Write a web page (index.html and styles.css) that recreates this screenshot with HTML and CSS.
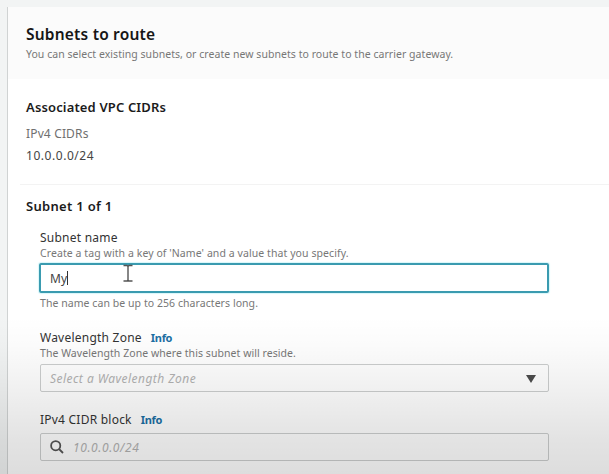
FILE: index.html
```html
<!DOCTYPE html>
<html lang="en">
<head>
<meta charset="utf-8">
<title>Subnets to route</title>
<link rel="stylesheet" href="styles.css">
</head>
<body>
<main class="panel">
  <header class="panel-header">
    <h1 class="title">Subnets to route</h1>
    <p class="hint lead">You can select existing subnets, or create new subnets to route to the carrier gateway.</p>
  </header>
  <section class="cidrs">
    <h2 class="heading assoc">Associated VPC CIDRs</h2>
    <div class="value muted">IPv4 CIDRs</div>
    <div class="value address">10.0.0.0/24</div>
  </section>
  <section class="subnet">
    <h2 class="heading count">Subnet 1 of 1</h2>
    <div class="field name-field">
      <div class="label">Subnet name</div>
      <div class="hint name-hint">Create a tag with a key of 'Name' and a value that you specify.</div>
      <div class="control focused"><span class="typed">My</span><span class="caret"></span>
        <svg class="pointer" width="12" height="20" viewBox="0 0 12 20"><path d="M1.5 1.5H4.8Q6 1.5 6 3Q6 1.5 7.2 1.5H10.5M6 3V17M1.5 17H4.8Q6 17 6 15.5Q6 17 7.2 17H10.5"/></svg>
      </div>
      <div class="hint limit">The name can be up to 256 characters long.</div>
    </div>
    <div class="field zone-field">
      <div class="label-row"><span class="label zone">Wavelength Zone</span><a class="info">Info</a></div>
      <div class="hint zone-hint">The Wavelength Zone where this subnet will reside.</div>
      <div class="control select"><span class="placeholder">Select a Wavelength Zone</span>
        <svg class="arrow" width="10" height="8" viewBox="0 0 10 8"><path d="M0 0H10L5 8Z"/></svg>
      </div>
    </div>
    <div class="field block-field">
      <div class="label-row"><span class="label block">IPv4 CIDR block</span><a class="info">Info</a></div>
      <div class="control search">
        <svg class="lens" width="14" height="14" viewBox="0 0 14 14"><circle cx="5.7" cy="5.7" r="4.6"/><path d="M9 9L13 13"/></svg>
        <span class="placeholder cidr">10.0.0.0/24</span>
      </div>
    </div>
  </section>
</main>
<div class="shade"></div>
</body>
</html>
```
FILE: styles.css
```css
* { box-sizing: border-box; }
body {
  margin: 0;
  height: 474px;
  overflow: hidden;
  padding: 7px 0 0 7px;
  background: #f2f4f4;
  font-family: "Noto Sans", "Open Sans", sans-serif;
  color: #333;
}
h1, h2, p { margin: 0; }
.panel {
  height: 467px;
  border-left: 1px solid #d0d3d3;
  background: #fff;
  white-space: nowrap;
}
.panel-header {
  height: 72px;
  padding: 16px 18px 0;
  background: #fbfbfb;
}
.title { font-size: 15.5px; line-height: 22px; font-weight: 600; letter-spacing: 0.2px; color: #161616; }
.hint { font-size: 10.5px; line-height: 14px; letter-spacing: 0.06px; color: #777; }
.lead { margin-top: 2px; letter-spacing: 0.045px; }
.cidrs {
  height: 106px;
  margin-left: 12px;
  padding: 18px 0 0 6px;
  border-bottom: 1px solid #f3f3f3;
}
.heading { font-size: 13px; line-height: 20px; font-weight: 600; letter-spacing: 0.15px; color: #1b1b1b; }
.count { letter-spacing: 0.3px; }
.value { font-size: 12px; line-height: 22px; }
.muted { margin-top: 6px; letter-spacing: 0.15px; color: #707070; }
.address { letter-spacing: 0.54px; color: #444; }
.subnet { padding: 11px 18px 0; }
.field { width: 510px; margin-left: 14px; }
.label { display: block; font-size: 12px; line-height: 18px; letter-spacing: 0.23px; color: #333; }
.label-row { display: flex; gap: 9px; }
.info { font-size: 11px; line-height: 18px; font-weight: 700; letter-spacing: -0.3px; color: #1b6fa3; }
.name-field { margin-top: 13px; }
.control {
  position: relative;
  display: flex;
  align-items: center;
  width: 509px;
  height: 28px;
  border: 1px solid #cccece;
  border-radius: 2px;
  padding: 0 9px;
  font-size: 12px;
}
.focused {
  width: 510px;
  height: 30px;
  margin: 3px 0 0 -1px;
  border: 2px solid #3a9bb0;
  box-shadow: 0 0 1px 1px #d8f7fa;
}
.typed { color: #444; }
.caret { width: 1px; height: 14px; background: #333; }
.pointer { position: absolute; left: 81px; top: -1px; fill: none; stroke: #555; stroke-width: 1.4; }
.limit { margin-top: 3px; }
.zone-field { margin-top: 19px; }
.zone-hint { margin-top: -1px; }
.name-hint { margin-top: -1px; letter-spacing: 0.08px; }
.select { margin-top: 4px; }
.placeholder { font-style: italic; letter-spacing: 0.46px; color: #b2b2b2; }
.arrow { position: absolute; right: 12px; top: 10px; fill: #4c4c4c; }
.block-field { margin-top: 19px; }
.search { margin-top: 4px; }
.lens { fill: none; stroke: #555; stroke-width: 1.8; }
.cidr { margin-left: 9px; letter-spacing: 0.6px; }
.shade {
  position: absolute;
  inset: 316px 0 0 0;
  background: linear-gradient(rgba(0, 0, 0, 0), rgba(0, 0, 0, 0.015) 18%, rgba(0, 0, 0, 0.05) 42%, rgba(0, 0, 0, 0.11) 78%, rgba(0, 0, 0, 0.135));
  pointer-events: none;
}
```
